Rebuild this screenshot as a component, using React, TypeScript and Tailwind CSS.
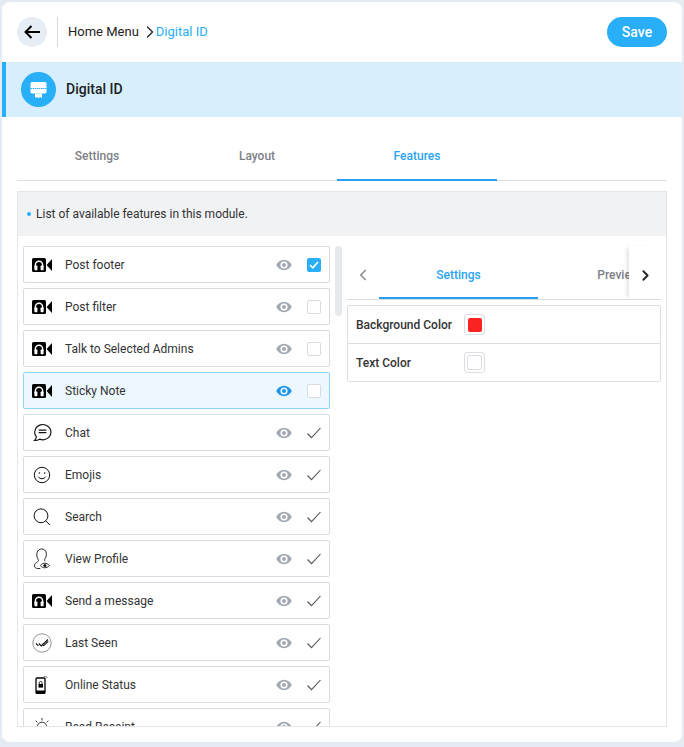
import { ChevronLeft, ChevronRight } from "lucide-react";
import type { ReactNode } from "react";

const CameraIcon = () => (
  <svg width="20" height="14" viewBox="0 0 20 14">
    <rect x="0" y="0" width="14" height="14" rx="1.500" fill="#000" />
    <path d="M3.400 9V6.800a3.600 3.600 0 0 1 7.200 0V9" fill="none" stroke="#fff" strokeWidth="1.500" />
    <rect x="2.400" y="7.600" width="3" height="4.600" rx="0.700" fill="#fff" />
    <rect x="8.600" y="7.600" width="3" height="4.600" rx="0.700" fill="#fff" />
    <path d="M14.600 7L20 1v12z" fill="#000" />
  </svg>
);

const ChatIcon = () => (
  <svg width="19" height="19" viewBox="0 0 20 20" fill="none" stroke="#111" strokeWidth="1.200">
    <path d="M3.600 14.500A8.500 8 0 1 1 7 17c-1.600.9-3.500 1.400-5.400 1.300 1-.9 1.700-2.300 2-3.800z" />
    <path d="M6 7.500h8M6 10.200h8" strokeWidth="1.400" />
  </svg>
);

const SmileIcon = () => (
  <svg width="18" height="18" viewBox="0 0 18 18" fill="none" stroke="#111" strokeWidth="1">
    <circle cx="9" cy="9" r="7.700" />
    <circle cx="6.400" cy="7" r="0.800" fill="#111" stroke="none" />
    <circle cx="11.600" cy="7" r="0.800" fill="#111" stroke="none" />
    <path d="M5.200 10.600c1.800 2.800 5.800 2.800 7.600 0" />
  </svg>
);

const SearchIcon = () => (
  <svg width="18" height="18" viewBox="0 0 18 18" fill="none" stroke="#111" strokeWidth="1">
    <circle cx="8" cy="7.800" r="6.900" />
    <path d="M12.800 12.800l4.200 4.400" />
  </svg>
);

const ProfileIcon = () => (
  <svg width="18" height="22" viewBox="0 0 18 22" fill="none" stroke="#111" strokeWidth="0.900">
    <path d="M5.200 11.500C3.600 9 3.600 7 4 4.800 4.600 2.200 6.600 1 8.700 1s4.100 1.300 4.500 3.800c.4 2.200.1 4.300-1.500 6.500-.4.700-.2 1.500.3 2" />
    <path d="M5.200 11.500c.5.900.3 1.600-.5 2.200-1.500 1-3.200 1.700-3.200 4 0 1.800 1.300 2.800 3.300 2.800h2.500" />
    <path d="M7.500 17.500c1.800-3 6.700-3 8.800 0-2.100 3-7 3-8.800 0z" />
    <circle cx="11.900" cy="17.500" r="1.500" fill="#111" stroke="none" />
  </svg>
);

const LastSeenIcon = () => (
  <svg width="20" height="20" viewBox="0 0 20 20" fill="none">
    <circle cx="10" cy="10" r="9.200" stroke="#666" strokeWidth="0.700" />
    <path d="M4 10.500l2.400 2.400M6.800 10.500l2.500 2.500 6.700-6.500M9.800 10.800l2 1.800 4.500-4.300" stroke="#111" strokeWidth="1.100" />
  </svg>
);

const PhoneIcon = () => (
  <svg width="14" height="19" viewBox="0 0 14 19">
    <rect x="1" y="3" width="9" height="15.500" rx="1.200" fill="none" stroke="#000" strokeWidth="1.300" />
    <rect x="1" y="15.500" width="9" height="3" fill="#000" />
    <rect x="3.500" y="9" width="4.500" height="3.600" fill="#000" />
    <path d="M4.300 9V7.800a1.400 1.400 0 0 1 2.800 0V9" fill="none" stroke="#000" strokeWidth="0.800" />
    <path d="M9 1.500c1.500-.6 2.800.2 3.500 1.500M9.500 3.200c.8-.3 1.300 0 1.600.6" fill="none" stroke="#444" strokeWidth="0.700" />
  </svg>
);

const BulbIcon = () => (
  <svg width="18" height="18" viewBox="0 0 18 18" fill="none" stroke="#222" strokeWidth="0.900">
    <circle cx="9" cy="9" r="4.800" />
    <path d="M9 0v2.500M2.700 2.700l1.700 1.700M15.300 2.700l-1.700 1.700M0 9h2.500M15.500 9H18" />
  </svg>
);

const EyeIcon = ({ active }: { active?: boolean }) => (
  <svg width="16" height="12" viewBox="0 0 16 12" className="mr-[15px]">
    <path
      fillRule="evenodd"
      d="M8 .8C4.600.8 1.700 2.900.2 6c1.500 3.100 4.400 5.200 7.800 5.200s6.300-2.100 7.800-5.200C14.300 2.900 11.400.8 8 .8zM8 9.600A3.600 3.600 0 1 1 8 2.400a3.600 3.600 0 0 1 0 7.200zM8 8a2 2 0 1 0 0-4 2 2 0 0 0 0 4z"
      fill={active ? "#1e96e8" : "#a3a9b2"}
    />
  </svg>
);

const Tick = () => (
  <svg width="14" height="12" viewBox="0 0 14 12" fill="none">
    <path d="M.5 6.500l4 4.200L13.500 1" stroke="#555" strokeWidth="1.100" />
  </svg>
);

function Checkbox({ checked }: { checked?: boolean }) {
  if (checked) {
    return (
      <span className="flex size-[14px] items-center justify-center rounded-[2px] bg-[#29aef8]">
        <svg width="10" height="8" viewBox="0 0 10 8" fill="none">
          <path d="M1 4l2.800 2.800L9 1" stroke="#fff" strokeWidth="1.600" />
        </svg>
      </span>
    );
  }
  return <span className="size-[14px] rounded-[2px] border border-[#d9dbe0] bg-white" />;
}

type Feature = {
  label: string;
  icon: ReactNode;
  control: "on" | "off" | "tick";
  active?: boolean;
};

const features: Feature[] = [
  { label: "Post footer", icon: <CameraIcon />, control: "on" },
  { label: "Post filter", icon: <CameraIcon />, control: "off" },
  { label: "Talk to Selected Admins", icon: <CameraIcon />, control: "off" },
  { label: "Sticky Note", icon: <CameraIcon />, control: "off", active: true },
  { label: "Chat", icon: <ChatIcon />, control: "tick" },
  { label: "Emojis", icon: <SmileIcon />, control: "tick" },
  { label: "Search", icon: <SearchIcon />, control: "tick" },
  { label: "View Profile", icon: <ProfileIcon />, control: "tick" },
  { label: "Send a message", icon: <CameraIcon />, control: "tick" },
  { label: "Last Seen", icon: <LastSeenIcon />, control: "tick" },
  { label: "Online Status", icon: <PhoneIcon />, control: "tick" },
  { label: "Read Receipt", icon: <BulbIcon />, control: "tick" },
];

function FeatureRow({ item }: { item: Feature }) {
  return (
    <div
      className={`flex h-[37px] shrink-0 items-center rounded-[2px] border pr-2 ${
        item.active ? "border-[#8fd6fb] bg-[#edf8fe]" : "border-[#d9dbe3] bg-white"
      }`}
    >
      <span className="mr-[5px] flex w-[36px] shrink-0 items-center justify-center">{item.icon}</span>
      <span className="flex-1 text-[12px] text-[#333]">{item.label}</span>
      <EyeIcon active={item.active} />
      {item.control === "tick" ? <Tick /> : <Checkbox checked={item.control === "on"} />}
    </div>
  );
}

export default function App() {
  return (
    <div className="h-[747px] overflow-hidden bg-[#e6eaf3] p-[2px] font-['Roboto',sans-serif]">
      <div className="flex h-[740px] flex-col overflow-hidden rounded-lg bg-white">
        {/* Top bar */}
        <div className="flex h-[60px] shrink-0 items-center px-[15px]">
          <button className="flex size-[30px] items-center justify-center rounded-full bg-[#e6edf4]">
            <svg width="16" height="14" viewBox="0 0 16 14" fill="none" stroke="#000" strokeWidth="2">
              <path d="M16 7H2M7.500 1L1.500 7l6 6" />
            </svg>
          </button>
          <div className="ml-[10px] h-[30px] w-px bg-[#d7d9de]" />
          <span className="ml-[10px] text-[13px] text-[#222]">Home Menu</span>
          <ChevronRight className="ml-[1px] -mr-[4px] size-[20px] text-[#222]" strokeWidth={1.500} />
          <span className="text-[13px] text-[#29aef8]">Digital ID</span>
          <button className="ml-auto h-[30px] w-[60px] rounded-full bg-[#29aef8] text-[14px] font-medium text-white">
            Save
          </button>
        </div>

        {/* Module banner */}
        <div className="flex h-[55px] shrink-0 items-center gap-[10px] border-l-4 border-[#29aef8] bg-[#d7effd] pl-[15px]">
          <span className="flex size-[35px] items-center justify-center rounded-full bg-[#29aef8]">
            <svg width="17" height="17" viewBox="0 0 17 17">
              <rect x="0.500" y="1" width="16" height="11.500" rx="1.500" fill="#fff" />
              <path d="M.5 7.500h16" stroke="#29aef8" strokeWidth="1" strokeDasharray="1.500 0.600" />
              <path d="M5 12.500h7V17l-1.700-1-1.800 1-1.800-1L5 17z" fill="#fff" />
            </svg>
          </span>
          <span className="text-[14px] font-medium text-[#222]">Digital ID</span>
        </div>

        {/* Body */}
        <div className="flex min-h-0 flex-1 flex-col px-[15px] pb-[15px]">
          <div className="flex h-[64px] shrink-0 border-b border-[#dcdee3]">
            <div className="flex w-[160px] items-center justify-center pt-[15px] text-[12px] font-medium text-[#7d8088]">Settings</div>
            <div className="flex w-[160px] items-center justify-center pt-[15px] text-[12px] font-medium text-[#7d8088]">Layout</div>
            <div className="-mb-px flex w-[160px] items-center justify-center border-b-2 border-[#2a9ff0] pt-[15px] text-[12px] font-medium text-[#29a3f5]">Features</div>
          </div>

          <div className="mt-[10px] flex min-h-0 flex-1 flex-col border border-[#e4e6ea]">
            <div className="flex h-[44px] shrink-0 items-center gap-[5px] bg-[#f1f2f4] pl-[9px]">
              <span className="size-[4px] rounded-full bg-[#29aef8]" />
              <span className="text-[12px] text-[#333]">List of available features in this module.</span>
            </div>

            <div className="flex min-h-0 flex-1 overflow-hidden pl-[5px] pt-[10px]">
              <div className="flex w-[307px] shrink-0 flex-col gap-[5px]">
                {features.map((f) => (
                  <FeatureRow key={f.label} item={f} />
                ))}
              </div>

              <div className="ml-[5px] h-[70px] w-[7px] shrink-0 rounded bg-[#e6e8ec]" />

              {/* Right pane */}
              <div className="ml-[5px] w-[314px] shrink-0">
                <div className="flex h-[54px] border-b border-[#dcdee3]">
                  <span className="flex w-[32px] shrink-0 items-center justify-center pt-[5px]">
                    <ChevronLeft className="size-[18px] text-[#8b8e95]" strokeWidth={2.200} />
                  </span>
                  <div className="flex min-w-0 flex-1 overflow-hidden">
                    <div className="flex h-[53px] w-[159px] shrink-0 items-center justify-center border-b-2 border-[#2a9ff0] pt-[7px] text-[12px] font-medium text-[#29a3f5]">
                      Settings
                    </div>
                    <div className="flex h-[53px] w-[159px] shrink-0 items-center justify-center pl-[2px] pt-[5px] text-[12px] font-medium text-[#7d8088]">
                      Preview
                    </div>
                  </div>
                  <span className="flex w-[32px] shrink-0 items-center justify-center pt-[5px] shadow-[-4px_0_4px_-2px_rgba(0,0,0,0.12)]">
                    <ChevronRight className="size-[17px] text-[#222]" strokeWidth={2.600} />
                  </span>
                </div>

                <div className="mt-[5px] rounded-[2px] border border-[#dcdee3]">
                  <div className="flex h-[38px] items-center border-b border-[#dcdee3] pl-2">
                    <span className="w-[108px] text-[12px] font-medium text-[#333]">Background Color</span>
                    <span className="flex size-[21px] items-center justify-center rounded-[3px] border border-[#dcdee3]">
                      <span className="size-[14px] rounded-[2px] bg-[#fb2222]" />
                    </span>
                  </div>
                  <div className="flex h-[37px] items-center pl-2">
                    <span className="w-[108px] text-[12px] font-medium text-[#333]">Text Color</span>
                    <span className="flex size-[21px] items-center justify-center rounded-[3px] border border-[#dcdee3]">
                      <span className="size-[15px] rounded-[2px] border border-[#dcdee3] bg-white" />
                    </span>
                  </div>
                </div>
              </div>
            </div>
          </div>
        </div>
      </div>
    </div>
  );
}
